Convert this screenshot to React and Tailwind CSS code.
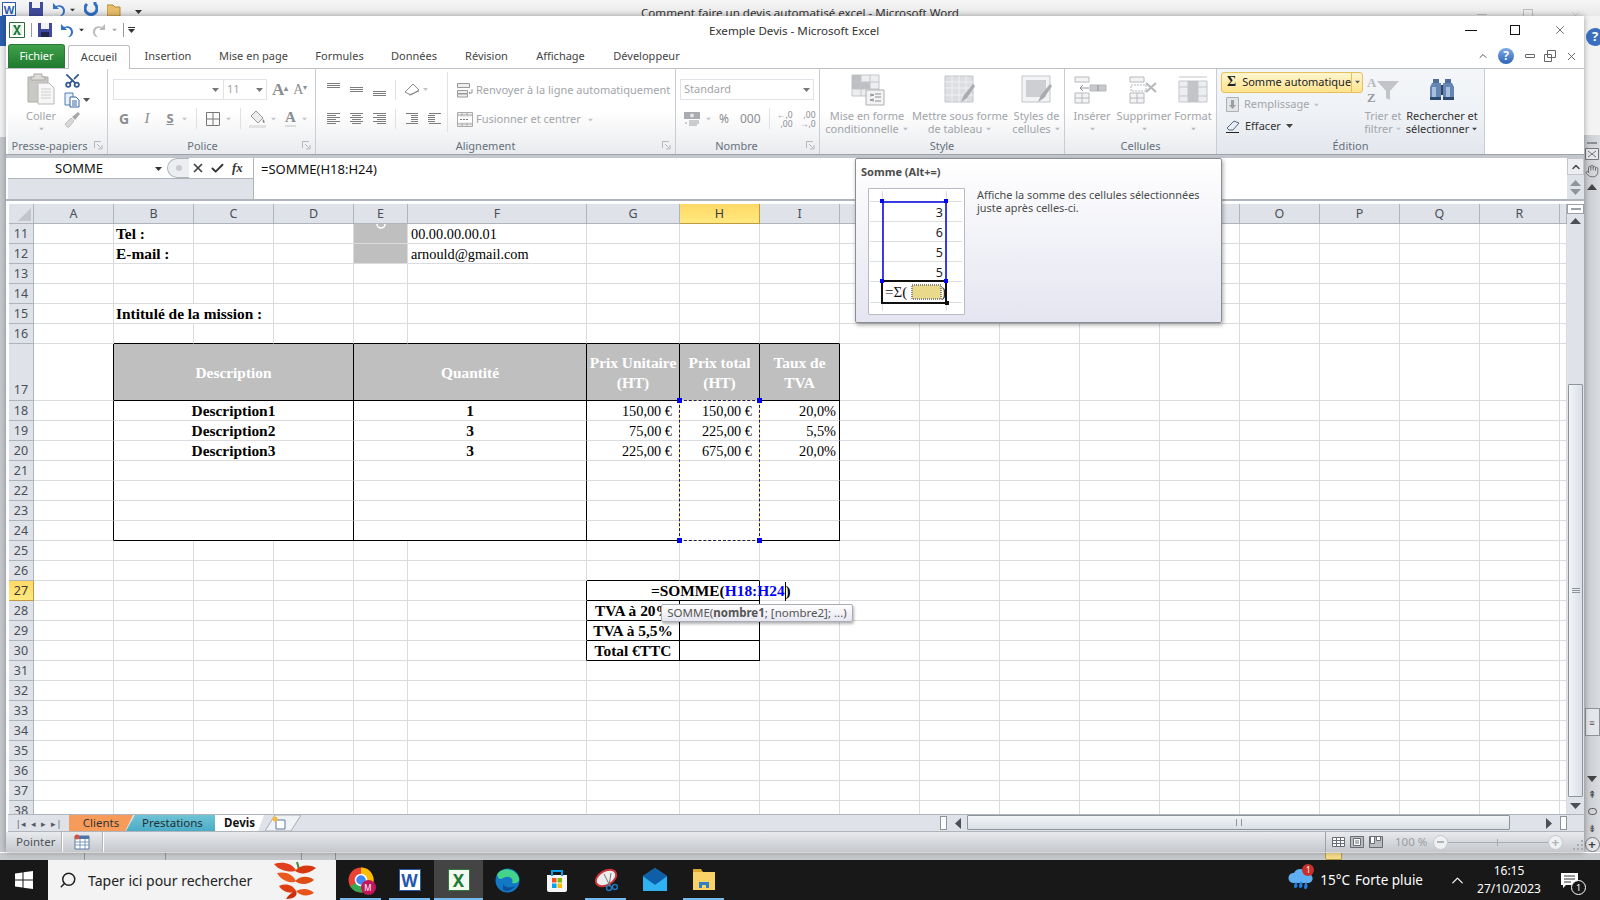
import { Scissors, Search, ChevronUp, X, Check, Hand } from "lucide-react";

const COLS = ["A", "B", "C", "D", "E", "F", "G", "H", "I", "J", "K", "L", "M", "N", "O", "P", "Q", "R", "S"];
const FIRST = 11;
const LAST = 38;

const tabs = [
  ["Insertion", "w-[46px] ml-[15px]"],
  ["Mise en page", "w-[69px] ml-[28px]"],
  ["Formules", "w-[47px] ml-[28px]"],
  ["Données", "w-[46px] ml-[28px]"],
  ["Révision", "w-[43px] ml-[28px]"],
  ["Affichage", "w-[49px] ml-[28px]"],
  ["Développeur", "w-[67px] ml-[28px]"],
];

const heavy = "font-bold text-[15.4px]";
const bold = `${heavy} text-center justify-center`;
const money = "justify-end pr-[7px]";
const pct = "justify-end pr-[3px]";
const head = `bg-[#bfbfbf] text-white ${heavy} text-center justify-center border-r-black border-b-black`;
const R = "border-r-black";
const B = "border-b-black";

const cells = {
  B11: { t: "Tel :", c: `${heavy} pl-[2px]` },
  B12: { t: "E-mail :", c: `${heavy} pl-[2px]` },
  E11: { c: "bg-[#bfbfbf] border-[#bfbfbf] justify-center items-start !pt-0", spinner: true },
  E12: { c: "bg-[#bfbfbf] border-[#bfbfbf]" },
  F11: { t: "00.00.00.00.01", c: "pl-[3px]" },
  F12: { t: "arnould@gmail.com", c: "pl-[3px]" },
  B15: { t: "Intitulé de la mission :", c: `${heavy} pl-[2px]`, span: 2 },
  A17: { c: R },
  B17: { t: "Description", c: head, span: 3 },
  E17: { t: "Quantité", c: head, span: 2 },
  G17: { t: "Prix Unitaire (HT)", c: head },
  H17: { t: "Prix total (HT)", c: head },
  I17: { t: "Taux de TVA", c: head },
  B18: { t: "Description1", c: `${bold} ${R}`, span: 3 },
  B19: { t: "Description2", c: `${bold} ${R}`, span: 3 },
  B20: { t: "Description3", c: `${bold} ${R}`, span: 3 },
  E18: { t: "1", c: `${bold} ${R}`, span: 2 },
  E19: { t: "3", c: `${bold} ${R}`, span: 2 },
  E20: { t: "3", c: `${bold} ${R}`, span: 2 },
  G18: { t: "150,00 €", c: money },
  G19: { t: "75,00 €", c: money },
  G20: { t: "225,00 €", c: money },
  H18: { t: "150,00 €", c: `${money} relative`, ants: true },
  H19: { t: "225,00 €", c: money },
  H20: { t: "675,00 €", c: money },
  I18: { t: "20,0%", c: `${pct} ${R}` },
  I19: { t: "5,5%", c: `${pct} ${R}` },
  I20: { t: "20,0%", c: `${pct} ${R}` },
  G26: { c: B },
  H26: { c: B },
  F27: { c: R },
  F28: { c: R },
  F29: { c: R },
  F30: { c: R },
  G27: { c: `${R} ${B} relative`, span: 2, edit: true },
  G28: { t: "TVA à 20%", c: `${bold} ${R} ${B} relative z-0`, tip: true },
  H28: { c: `${R} ${B}` },
  G29: { t: "TVA à 5,5%", c: `${bold} ${R} ${B}` },
  H29: { c: `${R} ${B}` },
  G30: { t: "Total €TTC", c: `${bold} ${R} ${B}` },
  H30: { c: `${R} ${B}` },
};
["B", "C", "D", "E", "F", "G", "H", "I"].forEach((c) => (cells[`${c}16`] = { c: B }));
[18, 19, 20, 21, 22, 23, 24].forEach((r) => {
  cells[`A${r}`] = { c: R };
  if (r > 20) {
    const bottom = r === 24 ? B : "";
    cells[`B${r}`] = { c: `${R} ${bottom}`, span: 3 };
    cells[`E${r}`] = { c: `${R} ${bottom}`, span: 2 };
    cells[`G${r}`] = { c: bottom };
    cells[`I${r}`] = { c: `${R} ${bottom}` };
  }
});

function Caret({ className = "" }) {
  return (
    <svg width="7" height="4" viewBox="0 0 7 4" className={`shrink-0 ${className}`}>
      <path d="M0 0h7L3.5 4z" fill="currentColor" />
    </svg>
  );
}

function Launcher() {
  return (
    <svg width="9" height="9" viewBox="0 0 9 9" className="text-[#b4b8be]">
      <path d="M.5 7V.5H7M3 3l4 4M4 8h4V4" fill="none" stroke="currentColor" />
    </svg>
  );
}

function Lines({ rows, size = 15 }) {
  return (
    <svg width={size} height="15" viewBox="0 0 15 15" className="text-[#7d7d7d] shrink-0">
      {rows.map(([y, x1, x2]) => (
        <path key={y} d={`M${x1} ${y}.5H${x2}`} stroke="currentColor" />
      ))}
    </svg>
  );
}

const vTop = [[1, 1, 14], [3, 1, 14], [5, 1, 14]];
const vMid = [[5, 1, 14], [7, 1, 14], [9, 1, 14]];
const vBot = [[9, 1, 14], [11, 1, 14], [13, 1, 14]];
const hLeft = [[2, 1, 14], [4, 1, 10], [6, 1, 14], [8, 1, 10], [10, 1, 14], [12, 1, 10]];
const hMid = [[2, 1, 14], [4, 3, 12], [6, 1, 14], [8, 3, 12], [10, 1, 14], [12, 3, 12]];
const hRight = [[2, 1, 14], [4, 5, 14], [6, 1, 14], [8, 5, 14], [10, 1, 14], [12, 5, 14]];

function GridIcon({ children }) {
  return (
    <svg width="36" height="32" viewBox="0 0 36 32" className="shrink-0 text-[#b9bcc1]">
      {children}
    </svg>
  );
}

function CondIcon() {
  return (
    <GridIcon>
      <path d="M3 1h27v21H3z" fill="#eceef0" stroke="#c3c5c9" />
      <path d="M3 1h9v14H3zM12 8h9v7h-9z" fill="#bdbfc3" />
      <path d="M3 8h27M3 15h27M12 1v21M21 1v21" stroke="#c3c5c9" fill="none" />
      <path d="M17 16h18v15H17z" fill="#f3f3f4" stroke="#aeb0b4" />
      <path d="M21 20l4 1-4 1M26 20h6M26 23h6M25 25l-4 1 4 1M26 27h6" stroke="#8e9094" fill="none" />
    </GridIcon>
  );
}

function TableIcon() {
  return (
    <GridIcon>
      <path d="M3 2h28v26H3z" fill="#dcdee1" stroke="#c3c5c9" />
      <path d="M3 8h28M3 14h28M3 21h28M10 2v26M17 2v26M24 2v26" stroke="#eff0f2" fill="none" />
      <path d="M19 28l3-7 9-11 2 2-8 12z" fill="#a9abaf" />
    </GridIcon>
  );
}

function StyleIcon() {
  return (
    <GridIcon>
      <path d="M3 2h28v26H3z" fill="#f2f3f4" stroke="#c3c5c9" />
      <path d="M7 6h20v17H7z" fill="#cdcfd2" />
      <path d="M19 28l3-7 9-11 2 2-8 12z" fill="#a9abaf" />
    </GridIcon>
  );
}

function InsertIcon() {
  return (
    <GridIcon>
      <path d="M1 3h14v5H1zM1 19h14v10H1zM8 19v10M1 24h14" fill="#f4f4f5" stroke="#b6b8bc" />
      <path d="M16 11h16v6H16z" fill="#c6c8cb" stroke="#b6b8bc" />
      <path d="M24 11v6M15 14H6m3-3l-3 3 3 3" stroke="#8f9195" fill="none" />
    </GridIcon>
  );
}

function DeleteIcon() {
  return (
    <GridIcon>
      <path d="M4 3h14v5H4zM4 19h14v10H4zM11 19v10M4 24h14" fill="#f4f4f5" stroke="#b6b8bc" />
      <path d="M5 11h15v6H5z" fill="none" stroke="#b6b8bc" strokeDasharray="2 1" />
      <path d="M20 9l10 9M30 9L20 18" stroke="#b5b7ba" strokeWidth="2" />
    </GridIcon>
  );
}

function FormatIcon() {
  return (
    <GridIcon>
      <path d="M4 7h28v21H4z" fill="#eceef0" stroke="#c3c5c9" />
      <path d="M13 7h10v21H13z" fill="#c2c4c8" />
      <path d="M4 3h28M13 7v21M23 7v21M4 13h28M4 22h28" stroke="#c3c5c9" fill="none" />
    </GridIcon>
  );
}

function LargeButton({ icon, lines, w, caret }) {
  return (
    <div className={`${w} shrink-0 flex flex-col items-center pt-[5px] text-[#a2a5a9] text-[11px] leading-[13px]`}>
      <div className="h-[32px]">{icon}</div>
      <div className="mt-[3px] text-center whitespace-nowrap">{lines[0]}</div>
      <div className="flex items-center gap-[3px] text-center whitespace-nowrap h-[13px]">
        {lines[1] && <span>{lines[1]}</span>}
        {caret && <Caret className="scale-75 text-[#b8bbbf] mt-[1px]" />}
      </div>
    </div>
  );
}

function Group({ w, label, launcher, children, labelPad = "", className = "from-white via-white to-[#e9ebee]" }) {
  return (
    <div className={`${w} shrink-0 h-full flex flex-col border-r border-[#c9cdd3] bg-gradient-to-b ${className}`}>
      <div className="flex-1 min-h-0 flex">{children}</div>
      <div
        className={`h-[17px] shrink-0 relative flex items-center justify-center pt-[2px] text-[11px] text-[#66707c] ${labelPad}`}
      >
        {label}
        {launcher && (
          <span className="absolute right-[4px] top-[4px]">
            <Launcher />
          </span>
        )}
      </div>
    </div>
  );
}

function Ribbon() {
  return (
    <div className="h-[85px] flex shrink-0">
      <Group w="w-[100px]" label="Presse-papiers" launcher labelPad="pr-[16px]">
        <div className="w-[56px] flex flex-col items-center pt-[4px] pl-[10px] text-[#a2a5a9] text-[11px]">
          <svg width="28" height="32" viewBox="0 0 28 32">
            <path d="M1 4h20v25H1z" fill="#c9c8c4" stroke="#aeadaa" />
            <path d="M7 1h8v3h3v3H4V4h3z" fill="#dddcd9" stroke="#a9a8a5" />
            <path d="M11 10h11l5 5v16H11z" fill="#f7f7f7" stroke="#b9b9b9" />
            <path d="M14 16h10M14 19h10M14 22h10M14 25h10" stroke="#cdcdcd" />
          </svg>
          <span className="mt-[4px] leading-[13px]">Coller</span>
          <Caret className="scale-75 text-[#b8bbbf] mt-[5px]" />
        </div>
        <div className="flex flex-col items-start pt-[3px] gap-[3px]">
          <Scissors size={17} strokeWidth={2.5} className="text-[#33598f] -rotate-90" />
          <div className="flex items-center gap-[3px]">
            <svg width="16" height="16" viewBox="0 0 16 16">
              <path d="M1 1h8v12H1z" fill="#eaf1fa" stroke="#4b7fb8" />
              <path d="M6 5h6l3 3v7H6z" fill="#fff" stroke="#34659f" />
              <path d="M8 9h5M8 11h5M8 13h5" stroke="#34659f" />
            </svg>
            <Caret className="text-[#555]" />
          </div>
          <svg width="17" height="17" viewBox="0 0 17 17">
            <path d="M1 13l6-6 3 3-5 6H3z" fill="#d8d8d8" stroke="#c0c0c0" />
            <path d="M8 6l6-5 2 2-5 6z" fill="#a8a8a8" />
          </svg>
        </div>
      </Group>
      <Group w="w-[208px]" label="Police" launcher labelPad="pr-[18px]">
        <div className="flex flex-col pl-[5px] pt-[10px] gap-[8px] w-full">
          <div className="flex items-center h-[21px]">
            <div className="w-[111px] h-[21px] border border-[#dfe2e6] flex items-center justify-end pr-[4px] text-[#777]">
              <Caret />
            </div>
            <div className="w-[43px] h-[21px] border border-l-0 border-[#dfe2e6] flex items-center justify-between px-[3px] text-[11px] text-[#a2a5a9]">
              11
              <span className="text-[#777]">
                <Caret />
              </span>
            </div>
            <span className="ml-[5px] font-['Liberation_Serif',serif] font-bold text-[17px] text-[#8a8d91] leading-none">
              A<sup className="text-[8px]">▴</sup>
            </span>
            <span className="ml-[5px] font-['Liberation_Serif',serif] text-[14px] text-[#8a8d91] leading-none">
              A<sup className="text-[8px]">▾</sup>
            </span>
          </div>
          <div className="flex items-center h-[21px] text-[#8a8d91]">
            <span className="w-[14px] ml-[4px] text-center font-bold text-[14px] leading-none">G</span>
            <span className="w-[14px] ml-[9px] text-center italic font-['Liberation_Serif',serif] text-[15px] leading-none">
              I
            </span>
            <span className="w-[14px] ml-[9px] text-center underline font-bold text-[13px] leading-none">S</span>
            <Caret className="ml-[4px] scale-75 text-[#c0c3c7]" />
            <div className="w-px h-[21px] bg-[#dfe1e4] ml-[8px]" />
            <svg width="14" height="14" viewBox="0 0 14 14" className="ml-[9px]">
              <path d="M.5.5h13v13H.5zM7 .5v13M.5 7h13" fill="none" stroke="#777" />
            </svg>
            <Caret className="ml-[5px] scale-75 text-[#c0c3c7]" />
            <div className="w-px h-[21px] bg-[#dfe1e4] ml-[8px]" />
            <svg width="17" height="18" viewBox="0 0 17 18" className="ml-[8px]">
              <path d="M7 1l7 7-5 5-7-7z" fill="#ededed" stroke="#999" />
              <path d="M14 9c2 2 2 4 1 4s-2-2-1-4" fill="#888" />
              <path d="M0 15h17v3H0z" fill="#e1e2e4" />
            </svg>
            <Caret className="ml-[4px] scale-75 text-[#c0c3c7]" />
            <span className="ml-[8px] font-['Liberation_Serif',serif] font-bold text-[15px] leading-none border-b-2 border-[#dcdde0]">
              A
            </span>
            <Caret className="ml-[5px] scale-75 text-[#c0c3c7]" />
          </div>
        </div>
      </Group>
      <Group w="w-[360px]" label="Alignement" launcher labelPad="pr-[20px]">
        <div className="flex flex-col pl-[10px] pt-[13px] gap-[14px]">
          <div className="flex items-center gap-[8px] h-[15px]">
            <Lines rows={vTop} />
            <Lines rows={vMid} />
            <Lines rows={vBot} />
            <div className="w-px h-[20px] bg-[#dfe1e4]" />
            <svg width="25" height="15" viewBox="0 0 25 15" className="text-[#8a8a8a]">
              <path d="M1 10l8-8 6 6-8 5z" fill="none" stroke="currentColor" />
              <path d="M5 13L15 9" stroke="currentColor" />
              <path d="M19 6h5l-2.5 3z" fill="#c0c3c7" />
            </svg>
          </div>
          <div className="flex items-center gap-[8px] h-[15px]">
            <Lines rows={hLeft} />
            <Lines rows={hMid} />
            <Lines rows={hRight} />
            <div className="w-px h-[20px] bg-[#dfe1e4]" />
            <Lines rows={[[2, 2, 14], [4, 7, 14], [6, 7, 14], [8, 7, 14], [10, 7, 14], [12, 2, 14]]} />
            <Lines rows={[[2, 2, 14], [4, 1, 8], [6, 1, 8], [8, 1, 8], [10, 1, 8], [12, 2, 14]]} />
          </div>
        </div>
        <div className="w-px h-[60px] bg-[#dfe1e4] ml-[5px] mt-[3px]" />
        <div className="flex flex-col pl-[9px] pt-[14px] gap-[14px] text-[11px] text-[#a2a5a9] whitespace-nowrap">
          <div className="flex items-center gap-[3px] h-[15px]">
            <svg width="16" height="15" viewBox="0 0 16 15">
              <path d="M.5.5h12v4H.5zM.5 7.5h10v3H.5zM.5 11h10v3H.5z" fill="#eee" stroke="#999" />
              <path d="M15 6v4h-3m1-1l-1 1 1 1" stroke="#999" fill="none" />
            </svg>
            Renvoyer à la ligne automatiquement
          </div>
          <div className="flex items-center gap-[3px] h-[15px]">
            <svg width="16" height="15" viewBox="0 0 16 15">
              <path d="M.5.5h15v14H.5z" fill="#eee" stroke="#aaa" />
              <path d="M1 5h14v5H1z" fill="#fff" />
              <path d="M1 3h14M1 12h14M5 1v3M10 1v3M5 11v3M10 11v3" stroke="#aaa" />
              <path d="M3 7.500h9" stroke="#777" strokeDasharray="2 1" />
            </svg>
            Fusionner et centrer
            <Caret className="ml-[3px] scale-75 text-[#c0c3c7]" />
          </div>
        </div>
      </Group>
      <Group w="w-[144px]" label="Nombre" launcher labelPad="pr-[22px]">
        <div className="flex flex-col pl-[4px] pt-[10px] gap-[8px]">
          <div className="w-[134px] h-[21px] border border-[#dfe2e6] flex items-center justify-between pl-[3px] pr-[3px] text-[11px] text-[#a2a5a9]">
            Standard
            <span className="text-[#777]">
              <Caret />
            </span>
          </div>
          <div className="flex items-center h-[21px] text-[12px] text-[#8a8d91]">
            <svg width="18" height="18" viewBox="0 0 18 18" className="ml-[3px]">
              <path d="M1 2h16v7H1z" fill="#a8abaf" />
              <circle cx="9" cy="5.500" r="2" fill="#e5e5e5" />
              <path d="M6 11h10M6 13h10M6 15h8M2 13h2" stroke="#9a9da1" />
            </svg>
            <Caret className="ml-[4px] scale-75 text-[#c0c3c7]" />
            <span className="ml-[7px] leading-none">%</span>
            <span className="ml-[11px] leading-none">000</span>
            <div className="w-px h-[21px] bg-[#dfe1e4] ml-[8px]" />
            <span className="ml-[5px] leading-[9px] text-[8.500px] w-[18px] text-right">
              ←,0
              <br />
              ,00
            </span>
            <span className="ml-[5px] leading-[9px] text-[8.500px] w-[18px] text-right">
              ,00
              <br />
              →,0
            </span>
          </div>
        </div>
      </Group>
      <Group w="w-[245px]" label="Style">
        <div className="flex pl-[2px]">
          <LargeButton w="w-[90px]" icon={<CondIcon />} lines={["Mise en forme", "conditionnelle"]} caret />
          <LargeButton w="w-[96px]" icon={<TableIcon />} lines={["Mettre sous forme", "de tableau"]} caret />
          <LargeButton w="w-[57px]" icon={<StyleIcon />} lines={["Styles de", "cellules"]} caret />
        </div>
      </Group>
      <Group w="w-[152px]" label="Cellules">
        <div className="flex pl-[4px]">
          <LargeButton w="w-[46px]" icon={<InsertIcon />} lines={["Insérer"]} caret />
          <LargeButton w="w-[58px]" icon={<DeleteIcon />} lines={["Supprimer"]} caret />
          <LargeButton w="w-[40px]" icon={<FormatIcon />} lines={["Format"]} caret />
        </div>
      </Group>
      <Group w="w-[268px]" label="Édition" className="from-[#f4f6f9] via-[#eff2f6] to-[#e3e7ed]">
        <div className="w-[146px] pl-[4px] pt-[3px] flex flex-col text-[11px] whitespace-nowrap">
          <div className="w-[142px] h-[21px] flex border border-[#e8bf5f] rounded-[3px] bg-gradient-to-b from-[#fff6cf] to-[#ffe38c] text-[#222]">
            <div className="flex-1 flex items-center pl-[5px] gap-[6px] border-r border-[#e8bf5f]">
              <span className="font-['Liberation_Serif',serif] font-bold text-[14px] leading-none">Σ</span>
              Somme automatique
            </div>
            <div className="w-[12px] flex items-center justify-center text-[#555]">
              <Caret className="scale-75" />
            </div>
          </div>
          <div className="h-[22px] mt-[1px] flex items-center pl-[5px] gap-[5px] text-[#a2a5a9]">
            <svg width="13" height="15" viewBox="0 0 13 15">
              <path d="M.5.5h12v14H.5z" fill="#e4e5e7" stroke="#aeb0b3" />
              <path d="M5 3h3v5h2l-3.500 4L3 8h2z" fill="#9c9ea1" />
            </svg>
            Remplissage
            <Caret className="scale-75 text-[#c0c3c7] -ml-[1px]" />
          </div>
          <div className="h-[22px] flex items-center pl-[5px] gap-[5px] text-[#333]">
            <svg width="14" height="14" viewBox="0 0 14 14">
              <path d="M1 9l7-7 5 2-6 7H3z" fill="#e8eef6" stroke="#57667a" />
              <path d="M0 13.500h13" stroke="#222" />
            </svg>
            Effacer
            <Caret className="text-[#444]" />
          </div>
        </div>
        <div className="w-[40px] flex flex-col items-center pt-[6px] text-[11px] leading-[13px] text-[#a2a5a9] whitespace-nowrap">
          <svg width="34" height="28" viewBox="0 0 34 28" className="font-['Liberation_Serif',serif]">
            <text x="1" y="12" fontSize="13" fontWeight="700" fill="#b6b8bb">A</text>
            <text x="1" y="27" fontSize="13" fontWeight="700" fill="#9a9c9f">Z</text>
            <path d="M11 6h22l-9 10v9l-4-2v-7z" fill="#c2c4c7" />
          </svg>
          <span className="mt-[6px]">Trier et</span>
          <span className="flex items-center gap-[2px]">
            filtrer
            <Caret className="scale-75 text-[#c0c3c7]" />
          </span>
        </div>
        <div className="w-[78px] flex flex-col items-center pt-[6px] text-[11px] leading-[13px] text-[#333] whitespace-nowrap">
          <svg width="28" height="28" viewBox="0 0 28 28">
            <path d="M5 4h6v5H5zM17 4h6v5h-6z" fill="#4f6d96" />
            <path d="M2 12l2-4h9v17H2zM26 12l-2-4h-9v17h11z" fill="#6586b2" />
            <path d="M4 12h4v12H4zM18 12h4v12h-4z" fill="#a8c0de" />
            <path d="M13 10h2v10h-2z" fill="#2e4569" />
            <path d="M2 22h11v3H2zM15 22h11v3H15z" fill="#2f4a72" />
          </svg>
          <span className="mt-[6px]">Rechercher et</span>
          <span className="flex items-center gap-[2px]">
            sélectionner
            <Caret className="scale-75 text-[#444]" />
          </span>
        </div>
      </Group>
    </div>
  );
}

function Spinner() {
  return (
    <svg width="10" height="6" viewBox="0 0 10 6">
      <path d="M1 0a4 4 0 008 0" fill="none" stroke="#fff" strokeWidth="1.600" />
    </svg>
  );
}

function Handle({ className }) {
  return <span className={`absolute w-[5px] h-[5px] bg-[#0000ff] ${className}`} />;
}

function Ants() {
  return (
    <div className="absolute -left-px -top-px w-[81px] h-[141px] border border-[#ffee77] z-10 pointer-events-none">
      <div className="absolute -inset-px border border-dashed border-[#15157a]" />
      <Handle className="-left-[3px] -top-[3px]" />
      <Handle className="-right-[3px] -top-[3px]" />
      <Handle className="-left-[3px] -bottom-[3px]" />
      <Handle className="-right-[3px] -bottom-[3px]" />
    </div>
  );
}

function Editor() {
  return (
    <div className={`absolute left-[64px] top-0 h-5 flex items-center whitespace-nowrap ${heavy} z-20`}>
      =SOMME(<span className="text-[#0000ff]">H18:H24</span>
      <span className="w-px h-[19px] bg-black" />)
    </div>
  );
}

function ArgTip() {
  return (
    <div className="absolute left-[74px] top-[3px] w-[192px] h-[18px] z-30 flex items-center justify-center whitespace-nowrap rounded-[2px] border border-[#a9acb2] bg-gradient-to-b from-white to-[#e6e7f1] shadow-[1px_2px_3px_rgba(0,0,0,0.3)] font-['Noto_Sans',sans-serif] font-normal text-[11.5px] text-[#555]">
      SOMME(<b>nombre1</b>; [nombre2]; ...)
    </div>
  );
}

function SheetCell({ cell, row, col }) {
  const highlightRow = row === 27;
  return (
    <>
      {col === 0 && (
        <div
          className={`${row === 17 ? "h-[57px] items-end pb-[1px]" : "h-5 items-center pt-[1px]"} flex justify-center border-r border-b border-[#b0b5bb] text-[12.5px] font-['Noto_Sans',sans-serif] ${
            highlightRow
              ? "bg-gradient-to-b from-[#ffd966] to-[#ffe97f] text-[#3a3a3a] border-r-[#c29a3f] border-b-[#c29a3f]"
              : "bg-[#dfe2e8] text-[#4a4f57]"
          }`}
        >
          {row}
        </div>
      )}
      <div
        className={`flex items-center min-w-0 whitespace-nowrap pt-[1px] border-r border-b border-[#dadcdf] ${
          cell.span === 2 ? "col-span-2" : cell.span === 3 ? "col-span-3" : ""
        } ${cell.c || ""}`}
      >
        {cell.spinner && <Spinner />}
        {row === 17 && cell.t && cell.t.length > 10 && cell.span === undefined ? (
          <span className="whitespace-normal leading-[20px]">{cell.t}</span>
        ) : (
          cell.t
        )}
        {cell.ants && <Ants />}
        {cell.edit && <Editor />}
        {cell.tip && <ArgTip />}
      </div>
    </>
  );
}

function Sheet() {
  const rows = [];
  for (let r = FIRST; r <= LAST; r++) {
    let skip = 0;
    COLS.forEach((c, i) => {
      if (skip > 0) {
        skip--;
        return;
      }
      const cell = cells[`${c}${r}`] || {};
      if (cell.span) skip = cell.span - 1;
      rows.push(<SheetCell key={`${c}${r}`} cell={cell} row={r} col={i} />);
    });
  }
  return (
    <div className="grid grid-cols-[25px_80px_80px_80px_80px_54px_179px_93px_80px_80px_80px_80px_80px_80px_80px_80px_80px_80px_80px_7px] auto-rows-auto w-[1558px] font-['Liberation_Serif',serif] text-[14.3px] leading-[18px] text-black">
      <div className="h-5 bg-[#dfe2e8] border-r border-b border-[#b0b5bb] flex items-end justify-end p-[2px]">
        <svg width="13" height="13" viewBox="0 0 13 13">
          <path d="M13 0v13H0z" fill="#c2c6cc" />
        </svg>
      </div>
      {COLS.map((c) => (
        <div
          key={c}
          className={`h-5 flex items-center justify-center border-r border-b pt-[1px] text-[12.5px] font-['Noto_Sans',sans-serif] ${
            c === "H"
              ? "bg-gradient-to-b from-[#ffd966] to-[#ffe97f] border-[#c29a3f] text-[#3a3a3a]"
              : "bg-[#dfe2e8] border-[#b0b5bb] text-[#4a4f57]"
          }`}
        >
          {c !== "S" && c}
        </div>
      ))}
      {rows}
    </div>
  );
}

function VScroll() {
  return (
    <div className="w-[17px] shrink-0 flex flex-col items-center bg-[#dfe2e8] text-[#4c4f54]">
      <div className="w-full h-[10px] border border-[#9aa0a7] bg-white flex items-center justify-center">
        <div className="w-[10px] h-[2px] bg-[#9aa0a7]" />
      </div>
      <svg width="11" height="6" viewBox="0 0 11 6" className="mt-[4px]">
        <path d="M0 6h11L5.500 0z" fill="currentColor" />
      </svg>
      <div className="h-[160px]" />
      <div className="w-[15px] h-[413px] border border-[#8e949b] rounded-[1px] bg-gradient-to-r from-[#f2f4f7] to-[#dbdfe5] flex items-center justify-center">
        <div className="w-[8px] h-[5px] border-y border-[#8e949b] relative">
          <div className="h-px bg-[#8e949b] mt-[1px]" />
        </div>
      </div>
      <svg width="11" height="6" viewBox="0 0 11 6" className="mt-[6px]">
        <path d="M0 0h11L5.500 6z" fill="currentColor" />
      </svg>
    </div>
  );
}

function SheetTabs() {
  return (
    <div className="h-[16px] shrink-0 flex items-stretch bg-[#dfe2e8] border-y border-[#b0b5bb] box-content text-[11.5px] leading-none ml-[2px]">
      <div className="w-[61px] flex items-center justify-around px-[5px] text-[#55595f] text-[9px]">
        <span>|◂</span>
        <span>◂</span>
        <span>▸</span>
        <span>▸|</span>
      </div>
      <div className="w-[64px] flex items-center justify-center bg-[#f79b5b] text-[#333] [clip-path:polygon(0_0,100%_0,88%_100%,0_100%)]">
        Clients
      </div>
      <div className="w-[89px] -ml-[7px] flex items-center justify-center pl-[4px] bg-gradient-to-b from-[#6fc3d6] to-[#4bacc6] text-[#1f2f33] [clip-path:polygon(10%_0,100%_0,100%_100%,0_100%)]">
        Prestations
      </div>
      <div className="w-[49px] flex items-center justify-center bg-white font-bold text-[#111] [clip-path:polygon(0_0,100%_0,88%_100%,0_100%)]">
        Devis
      </div>
      <svg width="40" height="16" viewBox="0 0 40 16" className="-ml-[3px]">
        <path d="M4 16L14 0h26L30 16z" fill="#f0f2f5" stroke="#a8adb4" />
        <path d="M15 5h9v9h-9z" fill="#fff" stroke="#5a78a0" />
        <circle cx="14" cy="4" r="2.500" fill="#f6b93b" />
      </svg>
      <div className="flex-1" />
      <div className="w-[7px] my-[1px] bg-white border border-[#8e949b] mr-[1px]" />
      <div className="w-[19px] flex items-center justify-center text-[#4c4f54]">
        <svg width="6" height="11" viewBox="0 0 6 11">
          <path d="M6 0v11L0 5.500z" fill="currentColor" />
        </svg>
      </div>
      <div className="w-[543px] h-[15px] border border-[#8e949b] rounded-[1px] bg-gradient-to-b from-[#f2f4f7] to-[#dbdfe5] flex items-center justify-center">
        <div className="w-[6px] h-[7px] border-x border-[#8e949b]" />
      </div>
      <div className="w-[50px] flex items-center justify-end pr-[8px] text-[#4c4f54]">
        <svg width="6" height="11" viewBox="0 0 6 11">
          <path d="M0 0v11l6-5.500z" fill="currentColor" />
        </svg>
      </div>
      <div className="w-[7px] my-[1px] bg-white border border-[#8e949b] mr-[17px]" />
    </div>
  );
}

function StatusBar() {
  return (
    <div className="flex-1 flex items-center bg-gradient-to-b from-[#e8eaed] to-[#c4c7cc] text-[11.5px] text-[#4d5156]">
      <div className="w-[56px] h-full border-r border-[#b0b5bb] flex items-center pl-[10px] shadow-[1px_0_0_white]">
        Pointer
      </div>
      <div className="w-[41px] h-full border-r border-[#b0b5bb] flex items-center justify-center shadow-[1px_0_0_white]">
        <svg width="16" height="16" viewBox="0 0 16 16">
          <path d="M1 2h14v13H1z" fill="#fff" stroke="#5a78a0" />
          <path d="M1 2h14v3H1z" fill="#4b74ac" />
          <path d="M1 8h14M1 11h14M6 5v10M11 5v10" stroke="#7c98bd" />
          <circle cx="3" cy="3" r="2.500" fill="#d9503f" />
        </svg>
      </div>
      <div className="flex-1" />
      <div className="w-px h-full bg-[#9da2a9]" />
      <svg width="13" height="10" viewBox="0 0 13 10" className="ml-[6px]">
        <path d="M.5.5h12v9H.5zM.5 3.500h12M.5 6.500h12M4.500.5v9M8.500.5v9" fill="#fff" stroke="#6a6e74" />
      </svg>
      <svg width="14" height="12" viewBox="0 0 14 12" className="ml-[5px]">
        <path d="M.5.5h13v11H.5z" fill="#b9bcc1" stroke="#6a6e74" />
        <path d="M3.500 2.500h7v7h-7zM5 5h4M5 7h4" fill="#fff" stroke="#6a6e74" />
      </svg>
      <svg width="14" height="12" viewBox="0 0 14 12" className="ml-[5px]">
        <path d="M.5.5h13v11H.5z" fill="#b9bcc1" stroke="#6a6e74" />
        <path d="M1.500.5h4v7h-4zM7.500.5h4v4h-4z" fill="#fff" stroke="#6a6e74" />
      </svg>
      <span className="ml-[12px] text-[#9a9da2] w-[30px] whitespace-nowrap">100 %</span>
      <span className="ml-[8px] w-[15px] h-[15px] rounded-full border border-[#c4c7cb] bg-[#eef0f2] flex items-center justify-center">
        <span className="w-[7px] h-[2px] bg-[#b0b3b7]" />
      </span>
      <div className="w-[100px] h-px bg-[#a9acb1] relative">
        <span className="absolute left-[49px] -top-[3px] w-px h-[7px] bg-[#a9acb1]" />
      </div>
      <span className="w-[15px] h-[15px] rounded-full border border-[#c4c7cb] bg-[#eef0f2] flex items-center justify-center text-[#b0b3b7] font-bold text-[13px] leading-none">
        +
      </span>
      <svg width="12" height="12" viewBox="0 0 12 12" className="ml-[8px] self-end text-[#a9acb1]">
        <path d="M10 0h2v2h-2zM6 4h2v2H6zM10 4h2v2h-2zM2 8h2v2H2zM6 8h2v2H6zM10 8h2v2h-2z" fill="currentColor" />
      </svg>
      <div className="w-px" />
    </div>
  );
}

function SumTooltip() {
  return (
    <div className="absolute left-[849px] top-[0px] w-[367px] h-[165px] z-40 bg-gradient-to-b from-white to-[#e4e5f0] border border-[#8b8f95] rounded-[2px] shadow-[1px_2px_4px_rgba(0,0,0,0.35)] text-[#4c4c4c] text-[10.9px] pl-[5px]">
      <div className="font-bold h-[29px] flex items-start pt-[5px] text-[11px]">Somme (Alt+=)</div>
      <div className="flex">
        <svg width="97" height="127" viewBox="0 0 97 127" className="ml-[7px] shrink-0 bg-white">
          <path d="M.5.5h96v126H.5z" fill="none" stroke="#b9bcc4" />
          <path
            d="M14.500 3v120M78.500 3v120M2 13.500h92M2 33.500h92M2 53.500h92M2 73.500h92M2 93.500h92M2 114.500h92"
            stroke="#dcdee2"
          />
          <path d="M15 14h63v79H15z" fill="none" stroke="#0000e0" strokeWidth="1.500" />
          <g fontFamily="Noto Sans, sans-serif" fontSize="12.500" fill="#222" textAnchor="end">
            <text x="75" y="29">3</text>
            <text x="75" y="49">6</text>
            <text x="75" y="69">5</text>
            <text x="75" y="89">5</text>
          </g>
          <path d="M14 93h64v22H14z" fill="#fff" stroke="#111" strokeWidth="2" />
          <text x="17" y="109" fontFamily="Liberation Serif, serif" fontSize="15" fill="#111">=Σ(</text>
          <path d="M44 97h29v14H44z" fill="#e9d98a" stroke="#8a8a8a" strokeWidth="2" strokeDasharray="1 1" />
          <text x="73" y="109" fontFamily="Liberation Serif, serif" fontSize="15" fill="#111">)</text>
          <path d="M12 11h4v4h-4zM76 11h4v4h-4zM12 91h4v4h-4zM76 91h4v4h-4z" fill="#0000ff" />
          <path d="M77 113h4v4h-4z" fill="#111" />
        </svg>
        <div className="ml-[12px] leading-[13px]">
          Affiche la somme des cellules sélectionnées
          <br />
          juste après celles-ci.
        </div>
      </div>
    </div>
  );
}

function Excel() {
  return (
    <div className="w-[1578px] h-[836px] shrink-0 flex flex-col bg-white shadow-[0_0_6px_rgba(0,0,0,0.35)] relative z-10 font-['Noto_Sans',sans-serif]">
      <div className="h-[28px] shrink-0 flex items-center relative">
        <svg width="16" height="16" viewBox="0 0 16 16" className="ml-[3px]">
          <path d="M.5.5h15v15H.5z" fill="#fff" stroke="#2c6b3a" />
          <path d="M3 3h10v10H3z" fill="#e3f0e3" />
          <path d="M4 3l3 5-3 5h2.500L8 9.500 9.500 13H12L9 8l3-5H9.500L8 6.500 6.500 3z" fill="#1f7a3a" />
        </svg>
        <div className="w-px h-[14px] bg-[#999] ml-[6px]" />
        <svg width="14" height="14" viewBox="0 0 14 14" className="ml-[6px]">
          <path d="M0 0h14v14H0z" fill="#3f4a9c" />
          <path d="M3 0h8v6H3z" fill="#f2f2f5" />
          <path d="M3 9h8v5H3z" fill="#20264f" />
        </svg>
        <svg width="13" height="14" viewBox="0 0 13 14" className="ml-[8px]">
          <path d="M1 1v6h6L5 5c3-1 6 1 6 4s-2 4-3 5c3 0 5-2 5-5 0-5-5-7-9-5z" fill="#2f6fc4" />
        </svg>
        <Caret className="ml-[5px] text-[#333] scale-75" />
        <svg width="13" height="14" viewBox="0 0 13 14" className="ml-[8px] -scale-x-100">
          <path d="M1 1v6h6L5 5c3-1 6 1 6 4s-2 4-3 5c3 0 5-2 5-5 0-5-5-7-9-5z" fill="#b8babd" />
        </svg>
        <Caret className="ml-[5px] text-[#aaa] scale-75" />
        <div className="w-px h-[14px] bg-[#999] ml-[5px]" />
        <div className="ml-[4px] flex flex-col items-center text-[#333]">
          <div className="w-[7px] h-px bg-[#333] mb-[1px]" />
          <Caret />
        </div>
        <div className="absolute left-[703px] top-[6px] text-[11.6px] text-[#333] whitespace-nowrap">
          Exemple Devis - Microsoft Excel
        </div>
        <div className="ml-auto flex items-center text-[#111]">
          <div className="w-[12px] h-px bg-[#111] mr-[33px]" />
          <div className="w-[10px] h-[10px] border border-[#111] mr-[33px]" />
          <X size={14} strokeWidth={1} className="mr-[17px]" />
        </div>
      </div>
      <div className="h-[25px] shrink-0 flex items-end border-b border-[#bcc0c6] text-[11px] text-[#444] pl-[2px] relative">
        <div className="w-[57px] h-[24px] rounded-t-[3px] bg-gradient-to-b from-[#3fa04a] to-[#1f7a2f] text-white flex items-center justify-center border border-[#2a7a36] border-b-0">
          Fichier
        </div>
        <div className="w-[62px] h-[24px] ml-[3px] -mb-px rounded-t-[3px] bg-white border border-[#bcc0c6] border-b-0 flex items-center justify-center">
          Accueil
        </div>
        {tabs.map(([name, cls]) => (
          <div key={name} className={`${cls} h-[24px] flex items-center justify-center whitespace-nowrap`}>
            {name}
          </div>
        ))}
        <div className="ml-auto h-[24px] flex items-center pr-[6px] gap-[9px] text-[#555]">
          <ChevronUp size={12} strokeWidth={2} />
          <span className="w-[16px] h-[16px] rounded-full bg-gradient-to-b from-[#7fa9e4] to-[#2d65b8] text-white font-bold text-[12px] flex items-center justify-center">
            ?
          </span>
          <div className="w-[10px] h-[4px] border border-[#666] rounded-[1px] ml-[2px]" />
          <svg width="12" height="12" viewBox="0 0 12 12">
            <path d="M3.500.5h8v7h-8zM.5 4.500h7v7h-7z" fill="#fff" stroke="#666" />
          </svg>
          <X size={13} strokeWidth={1.6} />
        </div>
      </div>
      <div className="pl-[2px]">
        <Ribbon />
      </div>
      <div className="h-[4px] shrink-0 bg-[#c3c7cd] border-t border-[#9ea3a9]" />
      <div className="h-[41px] shrink-0 flex relative pl-[2px] bg-white">
        <div className="w-[245px] flex flex-col shrink-0">
          <div className="h-[21px] flex items-center border-b border-[#b0b5bb]">
            <div className="w-[159px] flex items-center text-[13px] text-[#111] pl-[47px] pt-[2px]">
              <span className="w-[100px]">SOMME</span>
              <Caret className="text-[#333]" />
            </div>
            <span className="w-[22px] h-[20px] rounded-l-full border border-r-0 border-[#b0b5bb] bg-[#eceef1] flex items-center justify-center">
              <span className="w-[6px] h-[6px] rounded-full bg-[#c9ccd1]" />
            </span>
            <X size={14} strokeWidth={3} className="ml-[2px] text-[#444]" />
            <Check size={15} strokeWidth={3} className="ml-[5px] text-[#333]" />
            <span className="ml-[7px] font-['Liberation_Serif',serif] italic font-bold text-[13px] text-[#333]">
              fx
            </span>
          </div>
          <div className="flex-1 bg-[#dfe2e8]" />
        </div>
        <div className="flex-1 border-l border-[#b0b5bb] pl-[7px] text-[13px] text-[#111] pt-[2px]">=SOMME(H18:H24)</div>
        <div className="w-[17px] shrink-0 flex flex-col items-center bg-[#dfe2e8] text-[#8e949b]">
          <div className="w-full h-[17px] bg-[#eceef1] border border-[#c3c7cd] flex items-center justify-center text-[#444]">
            <ChevronUp size={12} strokeWidth={3} />
          </div>
          <svg width="11" height="6" viewBox="0 0 11 6" className="mt-[5px]">
            <path d="M0 6h11L5.500 0z" fill="currentColor" />
          </svg>
          <svg width="11" height="6" viewBox="0 0 11 6" className="mt-[3px]">
            <path d="M0 0h11L5.500 6z" fill="currentColor" />
          </svg>
        </div>
        <SumTooltip />
      </div>
      <div className="h-[5px] shrink-0 border-t-2 border-[#b0b5bb] bg-white" />
      <div className="h-[610px] shrink-0 flex overflow-hidden pl-[3px]">
        <Sheet />
        <VScroll />
      </div>
      <SheetTabs />
      <StatusBar />
    </div>
  );
}

function WordStrip() {
  return (
    <div className="h-[16px] shrink-0 flex items-start bg-gradient-to-b from-[#f6f6f6] to-[#e8e8e8] overflow-hidden relative font-['Noto_Sans',sans-serif]">
      <span className="ml-[2px] mt-[2px] w-[14px] h-[14px] border border-[#2b5eb0] bg-white text-[#2b5eb0] font-bold text-[11px] leading-[13px] text-center">
        W
      </span>
      <svg width="14" height="14" viewBox="0 0 14 14" className="ml-[13px] mt-[2px]">
        <path d="M0 0h14v14H0z" fill="#3f4a9c" />
        <path d="M3 0h8v6H3z" fill="#f2f2f5" />
      </svg>
      <svg width="13" height="14" viewBox="0 0 13 14" className="ml-[9px] mt-[2px]">
        <path d="M1 1v6h6L5 5c3-1 6 1 6 4s-2 4-3 5c3 0 5-2 5-5 0-5-5-7-9-5z" fill="#2f6fc4" />
      </svg>
      <Caret className="ml-[4px] mt-[8px] text-[#333] scale-75" />
      <svg width="14" height="14" viewBox="0 0 14 14" className="ml-[8px] mt-[2px]">
        <path d="M3 2a6 6 0 108 0V0" fill="none" stroke="#2f6fc4" strokeWidth="3" />
      </svg>
      <svg width="15" height="14" viewBox="0 0 15 14" className="ml-[9px] mt-[2px]">
        <path d="M0 3h6l2 2h5v9H0z" fill="#e7bf6a" stroke="#b58a33" />
      </svg>
      <div className="ml-[13px] mt-[10px] text-[#333]">
        <Caret />
      </div>
      <div className="absolute left-[641px] top-[4px] text-[11.6px] text-[#333] whitespace-nowrap">
        Comment faire un devis automatisé excel - Microsoft Word
      </div>
      <div className="ml-auto flex items-start text-[#b6b6b6] pr-[18px] pt-[9px]">
        <div className="w-[10px] h-[1px] bg-[#bdbdbd] mt-[5px] mr-[36px]" />
        <div className="w-[10px] h-[10px] border border-[#bdbdbd] mr-[36px]" />
        <X size={13} strokeWidth={1} />
      </div>
    </div>
  );
}

function Side({ right }) {
  if (!right)
    return (
      <div className="w-[6px] shrink-0 flex flex-col">
        <div className="h-[30px] bg-[#2b5eb0]" />
        <div className="flex-1 bg-[#f1f2f4]" />
        <div className="h-[715px] bg-[#c5c8cd]" />
      </div>
    );
  return (
    <div className="w-[16px] shrink-0 flex flex-col items-center text-[#444] font-['Noto_Sans',sans-serif]">
      <div className="h-[119px] w-full bg-[#f3f3f3] relative overflow-hidden">
        <span className="absolute left-[2px] top-[12px] w-[18px] h-[18px] rounded-full bg-[#3a6fc0] text-white font-bold text-[13px] flex items-center justify-center">
          ?
        </span>
      </div>
      <div className="flex-1 w-full bg-gradient-to-r from-[#c6c9ce] to-[#dadcdf] flex flex-col items-center">
        <div className="w-[10px] h-[2px] bg-[#8b8f95] mt-[7px]" />
        <svg width="14" height="12" viewBox="0 0 14 12" className="mt-[4px]">
          <path d="M.5.5h13v11H.5z" fill="#e4e6e9" stroke="#777" />
          <path d="M3 3l8 6M11 3L3 9" stroke="#777" />
        </svg>
        <Hand size={14} strokeWidth={1.5} className="mt-[4px] text-[#666]" />
        <svg width="10" height="6" viewBox="0 0 10 6" className="mt-[6px]">
          <path d="M0 6h10L5 0z" fill="currentColor" />
        </svg>
        <div className="flex-1" />
        <div className="w-[15px] h-[28px] border border-[#8e949b] bg-[#e4e6e9] flex items-center justify-center text-[9px] leading-none">
          ≡
        </div>
        <div className="h-[40px]" />
        <svg width="10" height="6" viewBox="0 0 10 6">
          <path d="M0 0h10L5 6z" fill="currentColor" />
        </svg>
        <span className="text-[10px] leading-none mt-[7px]">⇞</span>
        <span className="w-[9px] h-[7px] border border-[#555] rounded-full mt-[9px]" />
        <span className="text-[10px] leading-none mt-[8px]">⇟</span>
        <div className="h-[19px] flex items-end">
          <span className="w-[15px] h-[15px] rounded-full border border-[#777] bg-[#e4e6e9] font-bold text-[13px] leading-none flex items-center justify-center">
            +
          </span>
        </div>
      </div>
    </div>
  );
}

function AppIcon({ children, active, running, className = "" }) {
  return (
    <div
      className={`w-[49px] h-full flex items-center justify-center relative ${active ? "bg-[#444]" : ""} ${className}`}
    >
      {children}
      {running && (
        <span className={`absolute bottom-0 h-[2px] bg-[#76b9ed] ${active ? "inset-x-0" : "inset-x-[4px]"}`} />
      )}
    </div>
  );
}

function Taskbar() {
  return (
    <div className="h-[40px] shrink-0 flex items-center bg-[#181818] text-white font-['Noto_Sans',sans-serif]">
      <div className="w-[48px] flex items-center justify-center">
        <svg width="18" height="18" viewBox="0 0 18 18">
          <path d="M0 2.500l7.500-1v7H0zM8.500 1.300L18 0v8.500H8.500zM0 9.500h7.500v7L0 15.500zM8.500 9.500H18V18l-9.500-1.300z" fill="#fff" />
        </svg>
      </div>
      <div className="w-[288px] h-full bg-[#f3f3f3] flex items-center text-[#222] text-[14px] shrink-0">
        <Search size={18} className="ml-[11px] -scale-x-100" />
        <span className="ml-[11px]">Taper ici pour rechercher</span>
        <svg width="46" height="40" viewBox="0 0 46 40" className="ml-auto mr-[18px]">
          <path d="M25 2l2 7" stroke="#3f8a2f" strokeWidth="2" fill="none" />
          <path d="M2 4c8-3 18-1 22 6-2 3-16 2-22-6z" fill="#e0401c" />
          <path d="M44 8c-7 6-15 7-21 3 5-6 14-7 21-3z" fill="#d8380f" />
          <path d="M5 13c8-2 16 1 19 8-3 3-14 1-19-8z" fill="#ea5a1e" />
          <path d="M42 20c-6 5-14 5-19 1 5-5 13-6 19-1z" fill="#e04a15" />
          <path d="M7 26c7-3 14-1 17 5-3 3-13 2-17-5z" fill="#df3c12" />
          <path d="M42 33c-6 4-14 3-18-2 6-3 13-3 18 2z" fill="#e8531a" />
          <path d="M14 39c2-4 6-7 10-8 2 4-1 8-10 8z" fill="#c92f0c" />
        </svg>
      </div>
      <div className="flex h-full">
        <AppIcon running>
          <div className="relative">
            <svg width="26" height="26" viewBox="0 0 26 26">
              <circle cx="13" cy="13" r="12.500" fill="#ea4335" />
              <path d="M13 13L2.200 19.300A12.500 12.500 0 0 0 19.300 23.800z" fill="#34a853" />
              <path d="M13 .5a12.500 12.500 0 0 1 10.800 18.800L13 13z" fill="#fbbc05" />
              <circle cx="13" cy="13" r="5.500" fill="#4285f4" stroke="#fff" strokeWidth="1.500" />
            </svg>
            <span className="absolute -right-[2px] -bottom-[2px] w-[15px] h-[15px] rounded-full bg-[#c2185b] text-[8px] flex items-center justify-center">
              M
            </span>
          </div>
        </AppIcon>
        <AppIcon running>
          <div className="w-[22px] h-[22px] bg-white border border-[#2a5ba8] text-[#2458b0] font-bold text-[17px] leading-none flex items-center justify-center">
            W
          </div>
        </AppIcon>
        <AppIcon running active>
          <div className="w-[22px] h-[22px] bg-[#f3f9f1] border border-[#2c7a3c] text-[#1e7a34] font-bold text-[17px] leading-none flex items-center justify-center">
            X
          </div>
        </AppIcon>
        <AppIcon>
          <svg width="25" height="25" viewBox="0 0 25 25">
            <circle cx="12.500" cy="12.500" r="12" fill="#1277c4" />
            <path d="M2 7c3-7 18-9 22 3 1 4-3 6-7 5 2-4-2-7-6-6-5 1-6 5-9-2z" fill="#43d38b" />
            <path d="M8 15c0 4 6 6 12 3-2 4-8 6-12 4z" fill="#0b4f9a" />
          </svg>
        </AppIcon>
        <AppIcon>
          <svg width="24" height="24" viewBox="0 0 24 24">
            <path d="M2 7h20v15a2 2 0 01-2 2H4a2 2 0 01-2-2z" fill="#f5f5f5" />
            <path d="M7 8V3h10v5" fill="none" stroke="#0aa0e8" strokeWidth="2" />
            <path d="M7 10h4.500v4.500H7z" fill="#f25022" />
            <path d="M12.500 10H17v4.500h-4.500z" fill="#7fba00" />
            <path d="M7 15.500h4.500V20H7z" fill="#00a4ef" />
            <path d="M12.500 15.500H17V20h-4.500z" fill="#ffb900" />
          </svg>
        </AppIcon>
        <AppIcon running>
          <svg width="24" height="24" viewBox="0 0 24 24">
            <ellipse cx="12" cy="10" rx="11" ry="7" fill="#eee" stroke="#c8353a" strokeWidth="2" transform="rotate(-30 12 10)" />
            <circle cx="15" cy="20" r="2.500" fill="none" stroke="#1e78c2" strokeWidth="1.500" />
            <circle cx="21" cy="19" r="2.500" fill="none" stroke="#1e78c2" strokeWidth="1.500" />
            <path d="M10 6l6 12M17 5l-2 13" stroke="#777" />
          </svg>
        </AppIcon>
        <AppIcon>
          <svg width="24" height="24" viewBox="0 0 24 24">
            <path d="M0 8l12-8 12 8v15H0z" fill="#1c9fe4" />
            <path d="M0 8l12 9 12-9-12-8z" fill="#0f5ea8" />
            <path d="M0 9l12 8 12-8v14H0z" fill="#31b2f0" />
          </svg>
        </AppIcon>
        <AppIcon running>
          <svg width="24" height="22" viewBox="0 0 24 22">
            <path d="M1 0h8l2 3H1z" fill="#e0a92e" />
            <path d="M1 3h22v18H1z" fill="#f8d266" />
            <path d="M7 13h10v6H7z" fill="#2f7fc4" />
            <path d="M10 16h4v4h-4z" fill="#f8d266" />
          </svg>
        </AppIcon>
      </div>
      <div className="ml-auto flex items-center h-full">
        <div className="relative w-[24px] h-[24px]">
          <svg width="25" height="24" viewBox="0 0 25 24">
            <path d="M5 15a5 5 0 011-10 7 7 0 0113 1 4.500 4.500 0 012 9z" fill="#5fb0f2" />
            <path d="M8 14c2 3 2 5 0 6s-3-3 0-6zM18 14c2 3 2 6 0 7s-3-3 0-7zM13 13c2 3 2 6 0 7s-3-3 0-7z" fill="#1f7fe0" />
          </svg>
          <span className="absolute -right-[2px] -top-[4px] w-[12px] h-[12px] rounded-full bg-[#c9302c] text-[8px] leading-none flex items-center justify-center">
            1
          </span>
        </div>
        <span className="ml-[8px] text-[13.500px] whitespace-nowrap">15°C</span>
        <span className="ml-[5px] text-[13.500px] whitespace-nowrap">Forte pluie</span>
        <ChevronUp size={19} strokeWidth={1.5} className="ml-[25px]" />
        <div className="ml-[3px] w-[78px] flex flex-col items-center text-[12px] leading-[18px]">
          <span>16:15</span>
          <span>27/10/2023</span>
        </div>
        <div className="relative ml-[13px] mr-[22px]">
          <svg width="17" height="15" viewBox="0 0 17 15">
            <path d="M0 0h17v12H5l-3 3v-3H0z" fill="#fff" />
            <path d="M3 3h11M3 6h11M3 9h7" stroke="#333" />
          </svg>
          <span className="absolute -right-[8px] -bottom-[7px] w-[15px] h-[15px] rounded-full border border-white bg-[#181818] text-[9px] leading-none flex items-center justify-center">
            1
          </span>
        </div>
      </div>
    </div>
  );
}

function WordStatus() {
  return (
    <div className="h-[8px] shrink-0 flex bg-[#c6c8cb] border-t border-white">
      <div className="w-[85px] border-r border-[#8d9095]" />
      <div className="w-[81px] border-r border-[#8d9095]" />
      <div className="w-[136px] border-r border-[#8d9095]" />
      <div className="w-[34px] border-r border-[#8d9095]" />
      <div className="w-[989px]" />
      <div className="w-[17px] bg-[#f5dc8c] border-x border-b border-[#b59a45] rounded-b-[2px]" />
    </div>
  );
}

export default function App() {
  return (
    <div className="w-[1600px] h-[900px] flex flex-col overflow-hidden bg-[#e4e5e7]">
      <WordStrip />
      <div className="flex h-[836px] shrink-0">
        <Side />
        <Excel />
        <Side right />
      </div>
      <WordStatus />
      <Taskbar />
    </div>
  );
}
